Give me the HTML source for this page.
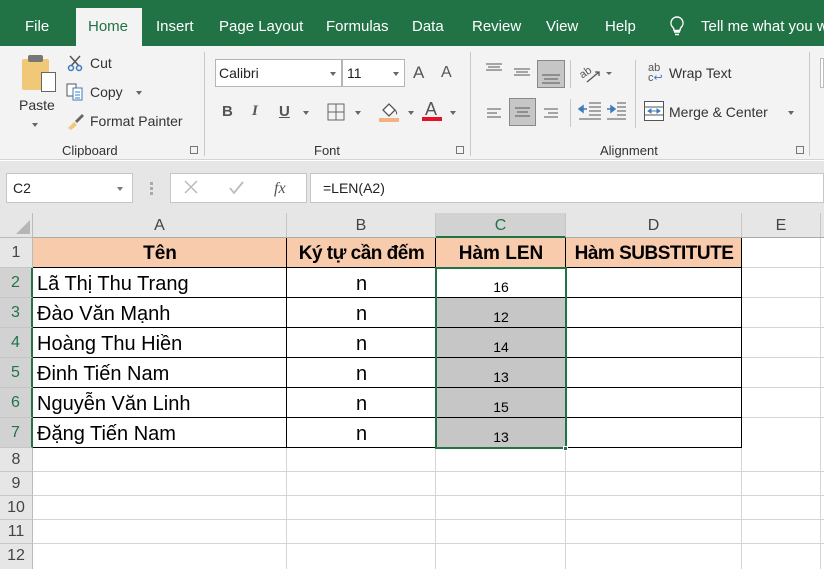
<!DOCTYPE html>
<html><head><meta charset="utf-8">
<style>
*{margin:0;padding:0;box-sizing:border-box}
body{width:824px;height:569px;overflow:hidden;background:#fff;font-family:"Liberation Sans",sans-serif;position:relative;color:#262626}
.a{position:absolute}
.tab{position:absolute;top:18px;color:#fff;font-size:15px;white-space:nowrap}
.rb{font-size:14px;color:#333;white-space:nowrap}
.cell{position:absolute;white-space:nowrap}
.hd{position:absolute;background:#e6e6e6;color:#444;font-size:16px;text-align:center}
</style></head><body>
<div class="a" style="left:0;top:0;width:824px;height:46px;background:#217346"></div>
<div class="a" style="left:76px;top:8px;width:66px;height:38px;background:#f3f3f3"></div>
<div class="tab" style="left:25px">File</div>
<div class="tab" style="left:88px;color:#217346">Home</div>
<div class="tab" style="left:156px">Insert</div>
<div class="tab" style="left:219px">Page Layout</div>
<div class="tab" style="left:326px">Formulas</div>
<div class="tab" style="left:412px">Data</div>
<div class="tab" style="left:472px">Review</div>
<div class="tab" style="left:546px">View</div>
<div class="tab" style="left:605px">Help</div>
<svg class="a" style="left:668px;top:15px" width="18" height="22"><path d="M9 2a6 6 0 0 0-4 10.5c1 1 1 2 1 3h6c0-1 0-2 1-3A6 6 0 0 0 9 2zM6 17h6M7 19.5h4" fill="none" stroke="#fff" stroke-width="1.4"/></svg>
<div class="tab" style="left:701px">Tell me what you w</div>
<div class="a" style="left:0;top:46px;width:824px;height:114px;background:#f3f3f3;border-bottom:1px solid #d4d4d4"></div>
<div class="a" style="left:22px;top:59px;width:27px;height:31px;background:#f0c878;border-radius:2px"></div>
<div class="a" style="left:28px;top:55px;width:15px;height:7px;background:#777;border-radius:2px"></div>
<div class="a" style="left:41px;top:72px;width:15px;height:20px;background:#fff;border:1px solid #666"></div>
<div class="a rb" style="left:19px;top:97px">Paste</div>
<div class="a" style="left:32px;top:123px;border:3px solid transparent;border-top:4px solid #666"></div>
<svg class="a" style="left:66px;top:54px" width="18" height="18"><path d="M4 2l9 10M14 2L5 12" stroke="#555" stroke-width="1.5"/><circle cx="5" cy="14" r="2.5" fill="none" stroke="#3b7bc0" stroke-width="1.5"/><circle cx="13" cy="14" r="2.5" fill="none" stroke="#3b7bc0" stroke-width="1.5"/></svg>
<div class="a rb" style="left:90px;top:55px">Cut</div>
<svg class="a" style="left:66px;top:83px" width="18" height="18"><rect x="1" y="1" width="9" height="12" fill="#fff" stroke="#555"/><rect x="7" y="5" width="9" height="12" fill="#fff" stroke="#3b7bc0"/><path d="M9 9h5M9 12h5M9 15h5" stroke="#3b7bc0"/></svg>
<div class="a rb" style="left:90px;top:84px">Copy</div>
<div class="a" style="left:136px;top:91px;border:3px solid transparent;border-top:4px solid #666"></div>
<svg class="a" style="left:66px;top:112px" width="20" height="18"><path d="M2 16l6-6 3 3-6 5z" fill="#f0c878"/><path d="M9 9l7-7 2 2-7 7z" fill="#666"/></svg>
<div class="a rb" style="left:90px;top:113px">Format Painter</div>
<div class="a rb" style="left:62px;top:143px;font-size:13px">Clipboard</div>
<div class="a" style="left:190px;top:146px;width:8px;height:8px;border:1px solid #777"></div>
<div class="a" style="left:204px;top:52px;width:1px;height:104px;background:#c8c8c8"></div>
<div class="a" style="left:215px;top:59px;width:127px;height:28px;background:#fff;border:1px solid #b5b5b5"></div>
<div class="a" style="left:219px;top:65px;font-size:14px;color:#222">Calibri</div>
<div class="a" style="left:330px;top:72px;border:3px solid transparent;border-top:4px solid #666"></div>
<div class="a" style="left:342px;top:59px;width:63px;height:28px;background:#fff;border:1px solid #b5b5b5"></div>
<div class="a" style="left:347px;top:65px;font-size:14px;color:#222">11</div>
<div class="a" style="left:393px;top:72px;border:3px solid transparent;border-top:4px solid #666"></div>
<div class="a" style="left:413px;top:63px;font-size:17px;color:#555">A</div>
<div class="a" style="left:441px;top:64px;font-size:16px;color:#555">A</div>
<div class="a" style="left:222px;top:103px;font-size:15px;font-weight:bold;color:#555">B</div>
<div class="a" style="left:252px;top:103px;font-size:15px;font-style:italic;font-family:'Liberation Serif';font-weight:bold;color:#555">I</div>
<div class="a" style="left:279px;top:103px;font-size:15px;font-weight:bold;color:#555;text-decoration:underline">U</div>
<div class="a" style="left:303px;top:111px;border:3px solid transparent;border-top:4px solid #666"></div>
<svg class="a" style="left:327px;top:103px" width="18" height="18"><path d="M1 1h16v16H1zM9 1v16M1 9h16" fill="none" stroke="#666"/></svg>
<div class="a" style="left:355px;top:111px;border:3px solid transparent;border-top:4px solid #666"></div>
<svg class="a" style="left:379px;top:100px" width="22" height="22"><path d="M4 10l6-6 6 6-6 6z" fill="#fff" stroke="#555" stroke-width="1.3"/><path d="M16 10c2 2 2 4 1 4" fill="none" stroke="#555"/><rect x="0" y="18" width="20" height="4" fill="#f4b183"/></svg>
<div class="a" style="left:408px;top:111px;border:3px solid transparent;border-top:4px solid #666"></div>
<div class="a" style="left:425px;top:99px;font-size:18px;color:#555">A</div>
<div class="a" style="left:422px;top:117px;width:20px;height:4px;background:#e81123"></div>
<div class="a" style="left:450px;top:111px;border:3px solid transparent;border-top:4px solid #666"></div>
<div class="a rb" style="left:314px;top:143px;font-size:13px">Font</div>
<div class="a" style="left:456px;top:146px;width:8px;height:8px;border:1px solid #777"></div>
<div class="a" style="left:470px;top:52px;width:1px;height:104px;background:#c8c8c8"></div>
<svg class="a" style="left:484px;top:58px" width="100" height="70">
<path d="M2 6h16M4 9h12M2 12h16" stroke="#555"/>
<path d="M30 11h16M32 14h12M30 17h16" stroke="#555"/>
<rect x="53.5" y="2.5" width="27" height="27" fill="#c6c6c6" stroke="#888"/>
<path d="M58 17h18M60 21h14M58 25h18" stroke="#555"/>
<path d="M3 51h14M3 55h10M3 59h14" stroke="#555"/>
<rect x="25.5" y="40.5" width="26" height="27" fill="#c6c6c6" stroke="#888"/>
<path d="M31 50h15M33 54h11M31 58h15" stroke="#555"/>
<path d="M60 51h14M64 55h10M60 59h14" stroke="#555"/>
</svg>
<div class="a" style="left:570px;top:60px;width:1px;height:28px;background:#c8c8c8"></div>
<div class="a" style="left:570px;top:99px;width:1px;height:28px;background:#c8c8c8"></div>
<svg class="a" style="left:577px;top:60px" width="40" height="26"><text x="2" y="16" font-size="11" fill="#555" transform="rotate(-35 8 12)" font-family="Liberation Sans">ab</text><path d="M10 22l12-10M18 12h4v4" stroke="#555" fill="none" stroke-width="1.3"/><path d="M29 12l3 3 3-3z" fill="#666"/></svg>
<svg class="a" style="left:577px;top:101px" width="50" height="22"><path d="M2 8l4-3v6zM4 8h6" stroke="#3b7bc0" fill="#3b7bc0" stroke-width="1.5"/><path d="M12 2h12M12 6h12M12 10h12M12 14h12M2 18h22" stroke="#555"/><path d="M38 8l-4-3v6z M30 8h6" stroke="#3b7bc0" fill="#3b7bc0" stroke-width="1.5"/><path d="M40 2h9M40 6h9M40 10h9M40 14h9M30 18h19" stroke="#555"/></svg>
<div class="a" style="left:635px;top:60px;width:1px;height:68px;background:#c8c8c8"></div>
<div class="a" style="left:648px;top:63px;font-size:11px;line-height:10px;color:#555">ab<br>c<span style="color:#3b7bc0">↩</span></div>
<div class="a rb" style="left:669px;top:65px">Wrap Text</div>
<svg class="a" style="left:644px;top:101px" width="20" height="20"><rect x="0.5" y="0.5" width="19" height="19" fill="#fff" stroke="#555"/><path d="M0 6h20M0 14h20" stroke="#555"/><path d="M4 10h12M4 10l3-2v4zM16 10l-3-2v4z" stroke="#3b7bc0" fill="#3b7bc0"/></svg>
<div class="a rb" style="left:669px;top:104px">Merge &amp; Center</div>
<div class="a" style="left:788px;top:111px;border:3px solid transparent;border-top:4px solid #666"></div>
<div class="a rb" style="left:600px;top:143px;font-size:13px">Alignment</div>
<div class="a" style="left:796px;top:146px;width:8px;height:8px;border:1px solid #777"></div>
<div class="a" style="left:809px;top:52px;width:1px;height:104px;background:#c8c8c8"></div>
<div class="a" style="left:820px;top:58px;width:4px;height:30px;background:#fff;border:1px solid #bbb"></div>
<div class="a" style="left:0;top:161px;width:824px;height:52px;background:#e6e6e6"></div>
<div class="a" style="left:6px;top:173px;width:127px;height:30px;background:#fff;border:1px solid #c6c6c6"></div>
<div class="a" style="left:13px;top:180px;font-size:14px;color:#222">C2</div>
<div class="a" style="left:117px;top:187px;border:3px solid transparent;border-top:4px solid #777"></div>
<div class="a" style="left:150px;top:182px;width:3px;height:3px;background:#aaa;box-shadow:0 5px #aaa,0 10px #aaa"></div>
<div class="a" style="left:170px;top:173px;width:137px;height:30px;background:#fff;border:1px solid #c6c6c6"></div>
<svg class="a" style="left:183px;top:179px" width="110" height="18"><path d="M2 2l12 12M14 2L2 14" stroke="#bbb" stroke-width="1.5"/><path d="M47 9l4 5 9-11" stroke="#bbb" stroke-width="1.8" fill="none"/><text x="91" y="14" font-size="16" font-style="italic" font-family="Liberation Serif" fill="#555">fx</text></svg>
<div class="a" style="left:310px;top:173px;width:514px;height:30px;background:#fff;border:1px solid #c6c6c6"></div>
<div class="a" style="left:323px;top:180px;font-size:14px;color:#222">=LEN(A2)</div>
<div class="a" style="left:0;top:213px;width:824px;height:356px;background:#fff"></div>
<div class="hd" style="left:0;top:213px;width:33px;height:25px;border-right:1px solid #bbb;border-bottom:1px solid #bbb"></div>
<svg class="a" style="left:14px;top:218px" width="16" height="16"><path d="M16 2v14H2z" fill="#b6b6b6"/></svg>
<div class="hd" style="left:33px;top:213px;width:254px;height:25px;line-height:25px;border-right:1px solid #c6c6c6;border-bottom:1px solid #aaa">A</div>
<div class="hd" style="left:287px;top:213px;width:149px;height:25px;line-height:25px;border-right:1px solid #c6c6c6;border-bottom:1px solid #aaa">B</div>
<div class="hd" style="left:436px;top:213px;width:130px;height:25px;line-height:25px;background:#d2d2d2;color:#217346;border-right:1px solid #c6c6c6;border-bottom:2px solid #217346">C</div>
<div class="hd" style="left:566px;top:213px;width:176px;height:25px;line-height:25px;border-right:1px solid #c6c6c6;border-bottom:1px solid #aaa">D</div>
<div class="hd" style="left:742px;top:213px;width:79px;height:25px;line-height:25px;border-right:1px solid #c6c6c6;border-bottom:1px solid #aaa">E</div>
<div class="hd" style="left:821px;top:213px;width:3px;height:25px;border-bottom:1px solid #aaa"></div>
<div class="a" style="left:286px;top:238px;width:1px;height:331px;background:#d4d4d4"></div>
<div class="a" style="left:435px;top:238px;width:1px;height:331px;background:#d4d4d4"></div>
<div class="a" style="left:565px;top:238px;width:1px;height:331px;background:#d4d4d4"></div>
<div class="a" style="left:741px;top:238px;width:1px;height:331px;background:#d4d4d4"></div>
<div class="a" style="left:820px;top:238px;width:1px;height:331px;background:#d4d4d4"></div>
<div class="a" style="left:33px;top:471px;width:791px;height:1px;background:#d4d4d4"></div>
<div class="a" style="left:33px;top:495px;width:791px;height:1px;background:#d4d4d4"></div>
<div class="a" style="left:33px;top:519px;width:791px;height:1px;background:#d4d4d4"></div>
<div class="a" style="left:33px;top:543px;width:791px;height:1px;background:#d4d4d4"></div>
<div class="a" style="left:742px;top:267px;width:82px;height:1px;background:#d4d4d4"></div>
<div class="a" style="left:742px;top:297px;width:82px;height:1px;background:#d4d4d4"></div>
<div class="a" style="left:742px;top:327px;width:82px;height:1px;background:#d4d4d4"></div>
<div class="a" style="left:742px;top:357px;width:82px;height:1px;background:#d4d4d4"></div>
<div class="a" style="left:742px;top:387px;width:82px;height:1px;background:#d4d4d4"></div>
<div class="a" style="left:742px;top:417px;width:82px;height:1px;background:#d4d4d4"></div>
<div class="a" style="left:33px;top:238px;width:709px;height:30px;background:#f8cbad"></div>
<div class="a" style="left:436px;top:298px;width:130px;height:150px;background:#c6c6c6"></div>
<div class="a" style="left:33px;top:267px;width:709px;height:1px;background:#000"></div>
<div class="a" style="left:33px;top:297px;width:709px;height:1px;background:#000"></div>
<div class="a" style="left:33px;top:327px;width:709px;height:1px;background:#000"></div>
<div class="a" style="left:33px;top:357px;width:709px;height:1px;background:#000"></div>
<div class="a" style="left:33px;top:387px;width:709px;height:1px;background:#000"></div>
<div class="a" style="left:33px;top:417px;width:709px;height:1px;background:#000"></div>
<div class="a" style="left:33px;top:447px;width:709px;height:1px;background:#000"></div>
<div class="a" style="left:286px;top:238px;width:1px;height:210px;background:#000"></div>
<div class="a" style="left:435px;top:238px;width:1px;height:210px;background:#000"></div>
<div class="a" style="left:565px;top:238px;width:1px;height:210px;background:#000"></div>
<div class="a" style="left:741px;top:238px;width:1px;height:210px;background:#000"></div>
<div class="cell" style="left:33px;top:243px;width:254px;text-align:center;font-size:19px;font-weight:bold;color:#000">Tên</div>
<div class="cell" style="left:287px;top:243px;width:149px;text-align:center;font-size:19px;font-weight:bold;color:#000;letter-spacing:-0.5px">Ký tự cần đếm</div>
<div class="cell" style="left:436px;top:243px;width:130px;text-align:center;font-size:19px;font-weight:bold;color:#000">Hàm LEN</div>
<div class="cell" style="left:566px;top:243px;width:176px;text-align:center;font-size:19px;font-weight:bold;color:#000;letter-spacing:-0.5px">Hàm SUBSTITUTE</div>
<div class="cell" style="left:37px;top:273px;font-size:20px;color:#000">Lã Thị Thu Trang</div>
<div class="cell" style="left:37px;top:303px;font-size:20px;color:#000">Đào Văn Mạnh</div>
<div class="cell" style="left:37px;top:333px;font-size:20px;color:#000">Hoàng Thu Hiền</div>
<div class="cell" style="left:37px;top:363px;font-size:20px;color:#000">Đinh Tiến Nam</div>
<div class="cell" style="left:37px;top:393px;font-size:20px;color:#000">Nguyễn Văn Linh</div>
<div class="cell" style="left:37px;top:423px;font-size:20px;color:#000">Đặng Tiến Nam</div>
<div class="cell" style="left:287px;top:273px;width:149px;text-align:center;font-size:20px;color:#000">n</div>
<div class="cell" style="left:287px;top:303px;width:149px;text-align:center;font-size:20px;color:#000">n</div>
<div class="cell" style="left:287px;top:333px;width:149px;text-align:center;font-size:20px;color:#000">n</div>
<div class="cell" style="left:287px;top:363px;width:149px;text-align:center;font-size:20px;color:#000">n</div>
<div class="cell" style="left:287px;top:393px;width:149px;text-align:center;font-size:20px;color:#000">n</div>
<div class="cell" style="left:287px;top:423px;width:149px;text-align:center;font-size:20px;color:#000">n</div>
<div class="cell" style="left:436px;top:279px;width:130px;text-align:center;font-size:14px;color:#000">16</div>
<div class="cell" style="left:436px;top:309px;width:130px;text-align:center;font-size:14px;color:#000">12</div>
<div class="cell" style="left:436px;top:339px;width:130px;text-align:center;font-size:14px;color:#000">14</div>
<div class="cell" style="left:436px;top:369px;width:130px;text-align:center;font-size:14px;color:#000">13</div>
<div class="cell" style="left:436px;top:399px;width:130px;text-align:center;font-size:14px;color:#000">15</div>
<div class="cell" style="left:436px;top:429px;width:130px;text-align:center;font-size:14px;color:#000">13</div>
<div class="a" style="left:435px;top:267px;width:132px;height:182px;border:2px solid #217346"></div>
<div class="a" style="left:563px;top:446px;width:5px;height:5px;background:#217346;border:1px solid #fff"></div>
<div class="hd" style="left:0;top:238px;width:33px;height:30px;line-height:30px;border-right:1px solid #bbb;border-bottom:1px solid #c6c6c6">1</div>
<div class="hd" style="left:0;top:268px;width:33px;height:30px;line-height:30px;background:#d2d2d2;color:#217346;border-right:2px solid #217346;border-bottom:1px solid #c6c6c6">2</div>
<div class="hd" style="left:0;top:298px;width:33px;height:30px;line-height:30px;background:#d2d2d2;color:#217346;border-right:2px solid #217346;border-bottom:1px solid #c6c6c6">3</div>
<div class="hd" style="left:0;top:328px;width:33px;height:30px;line-height:30px;background:#d2d2d2;color:#217346;border-right:2px solid #217346;border-bottom:1px solid #c6c6c6">4</div>
<div class="hd" style="left:0;top:358px;width:33px;height:30px;line-height:30px;background:#d2d2d2;color:#217346;border-right:2px solid #217346;border-bottom:1px solid #c6c6c6">5</div>
<div class="hd" style="left:0;top:388px;width:33px;height:30px;line-height:30px;background:#d2d2d2;color:#217346;border-right:2px solid #217346;border-bottom:1px solid #c6c6c6">6</div>
<div class="hd" style="left:0;top:418px;width:33px;height:30px;line-height:30px;background:#d2d2d2;color:#217346;border-right:2px solid #217346;border-bottom:1px solid #c6c6c6">7</div>
<div class="hd" style="left:0;top:448px;width:33px;height:24px;line-height:24px;border-right:1px solid #bbb;border-bottom:1px solid #c6c6c6">8</div>
<div class="hd" style="left:0;top:472px;width:33px;height:24px;line-height:24px;border-right:1px solid #bbb;border-bottom:1px solid #c6c6c6">9</div>
<div class="hd" style="left:0;top:496px;width:33px;height:24px;line-height:24px;border-right:1px solid #bbb;border-bottom:1px solid #c6c6c6">10</div>
<div class="hd" style="left:0;top:520px;width:33px;height:24px;line-height:24px;border-right:1px solid #bbb;border-bottom:1px solid #c6c6c6">11</div>
<div class="hd" style="left:0;top:544px;width:33px;height:25px;line-height:24px;border-right:1px solid #bbb">12</div>
</body></html>
